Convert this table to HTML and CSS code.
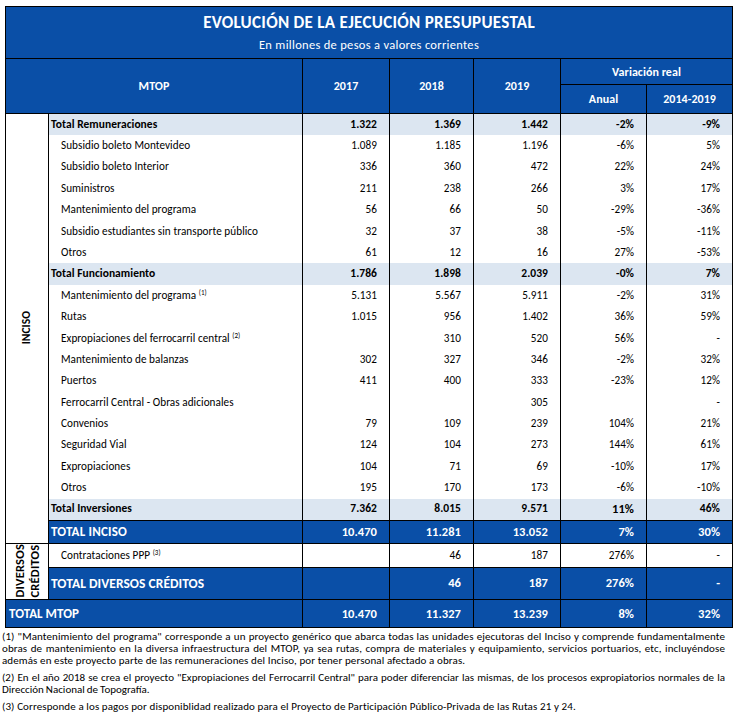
FILE: index.html
```html
<!DOCTYPE html>
<html lang="es">
<head>
<meta charset="utf-8">
<title>Evolución de la ejecución presupuestal</title>
<link rel="stylesheet" href="styles.css">
</head>
<body>
<div class="page">
<table class="budget">
  <colgroup>
    <col class="c-side"><col class="c-label"><col class="c-y17"><col class="c-y18"><col class="c-y19"><col class="c-an"><col class="c-pl">
  </colgroup>
  <tr class="r-title">
    <td colspan="7" class="title-cell">
      <div class="title">EVOLUCIÓN DE LA EJECUCIÓN PRESUPUESTAL</div>
      <div class="subtitle">En millones de pesos a valores corrientes</div>
    </td>
  </tr>
  <tr class="r-head1">
    <th colspan="2" rowspan="2">MTOP</th>
    <th rowspan="2">2017</th>
    <th rowspan="2">2018</th>
    <th rowspan="2">2019</th>
    <th colspan="2" class="var">Variación real</th>
  </tr>
  <tr class="r-head2">
    <th>Anual</th>
    <th>2014-2019</th>
  </tr>

  <tr class="row tot">
    <td rowspan="20" class="side"><span class="vert">INCISO</span></td>
    <td class="lbl">Total Remuneraciones</td><td>1.322</td><td>1.369</td><td>1.442</td><td>-2%</td><td>-9%</td>
  </tr>
  <tr class="row"><td class="lbl sub">Subsidio boleto Montevideo</td><td>1.089</td><td>1.185</td><td>1.196</td><td>-6%</td><td>5%</td></tr>
  <tr class="row"><td class="lbl sub">Subsidio boleto Interior</td><td>336</td><td>360</td><td>472</td><td>22%</td><td>24%</td></tr>
  <tr class="row"><td class="lbl sub">Suministros</td><td>211</td><td>238</td><td>266</td><td>3%</td><td>17%</td></tr>
  <tr class="row"><td class="lbl sub">Mantenimiento del programa</td><td>56</td><td>66</td><td>50</td><td>-29%</td><td>-36%</td></tr>
  <tr class="row"><td class="lbl sub">Subsidio estudiantes sin transporte público</td><td>32</td><td>37</td><td>38</td><td>-5%</td><td>-11%</td></tr>
  <tr class="row"><td class="lbl sub">Otros</td><td>61</td><td>12</td><td>16</td><td>27%</td><td>-53%</td></tr>
  <tr class="row tot"><td class="lbl">Total Funcionamiento</td><td>1.786</td><td>1.898</td><td>2.039</td><td>-0%</td><td>7%</td></tr>
  <tr class="row"><td class="lbl sub">Mantenimiento del programa <sup>(1)</sup></td><td>5.131</td><td>5.567</td><td>5.911</td><td>-2%</td><td>31%</td></tr>
  <tr class="row"><td class="lbl sub">Rutas</td><td>1.015</td><td>956</td><td>1.402</td><td>36%</td><td>59%</td></tr>
  <tr class="row"><td class="lbl sub">Expropiaciones del ferrocarril central <sup>(2)</sup></td><td></td><td>310</td><td>520</td><td>56%</td><td>-</td></tr>
  <tr class="row"><td class="lbl sub">Mantenimiento de balanzas</td><td>302</td><td>327</td><td>346</td><td>-2%</td><td>32%</td></tr>
  <tr class="row"><td class="lbl sub">Puertos</td><td>411</td><td>400</td><td>333</td><td>-23%</td><td>12%</td></tr>
  <tr class="row"><td class="lbl sub">Ferrocarril Central - Obras adicionales</td><td></td><td></td><td>305</td><td></td><td>-</td></tr>
  <tr class="row"><td class="lbl sub">Convenios</td><td>79</td><td>109</td><td>239</td><td>104%</td><td>21%</td></tr>
  <tr class="row"><td class="lbl sub">Seguridad Vial</td><td>124</td><td>104</td><td>273</td><td>144%</td><td>61%</td></tr>
  <tr class="row"><td class="lbl sub">Expropiaciones</td><td>104</td><td>71</td><td>69</td><td>-10%</td><td>17%</td></tr>
  <tr class="row"><td class="lbl sub">Otros</td><td>195</td><td>170</td><td>173</td><td>-6%</td><td>-10%</td></tr>
  <tr class="row tot last"><td class="lbl">Total Inversiones</td><td>7.362</td><td>8.015</td><td>9.571</td><td class="big">11%</td><td>46%</td></tr>
  <tr class="blue r-inciso"><td class="lbl">TOTAL INCISO</td><td>10.470</td><td>11.281</td><td>13.052</td><td>7%</td><td>30%</td></tr>

  <tr class="r-ppp">
    <td rowspan="2" class="side"><span class="vert two">DIVERSOS<br>CRÉDITOS</span></td>
    <td class="lbl sub">Contrataciones PPP <sup>(3)</sup></td><td></td><td>46</td><td>187</td><td>276%</td><td>-</td>
  </tr>
  <tr class="blue r-div"><td class="lbl">TOTAL DIVERSOS CRÉDITOS</td><td></td><td>46</td><td>187</td><td>276%</td><td>-</td></tr>
  <tr class="blue r-mtop"><td colspan="2" class="lbl mtop">TOTAL MTOP</td><td>10.470</td><td>11.327</td><td>13.239</td><td>8%</td><td>32%</td></tr>
</table>

<div class="notes">
  <p>(1) "Mantenimiento del programa" corresponde a un proyecto genérico que abarca todas las unidades ejecutoras del Inciso y comprende fundamentalmente obras de mantenimiento en la diversa infraestructura del MTOP, ya sea rutas, compra de materiales y equipamiento, servicios portuarios, etc, incluyéndose además en este proyecto parte de las remuneraciones del Inciso, por tener personal afectado a obras.</p>
  <p class="tight">(2) En el año 2018 se crea el proyecto "Expropiaciones del Ferrocarril Central" para poder diferenciar las mismas, de los procesos expropiatorios normales de la Dirección Nacional de Topografía.</p>
  <p>(3) Corresponde a los pagos por disponiblidad realizado para el Proyecto de Participación Público-Privada de las Rutas 21 y 24.</p>
</div>
</div>
</body>
</html>
```

FILE: styles.css
```css
* { box-sizing: border-box; }
html, body { margin: 0; padding: 0; background: #fff; }
body {
  font-family: "Carlito", "Lato", "Liberation Sans", sans-serif;
  color: #000;
}
.page {
  padding: 6px 0 0 5px;
  width: 736px;
}
.budget {
  border-collapse: collapse;
  table-layout: fixed;
  width: 727px;
  font-size: 11.2px;
  letter-spacing: 0.05px;
}
.c-side { width: 43px; }
.c-label { width: 254px; }
.c-y17 { width: 87px; }
.c-y18 { width: 84px; }
.c-y19 { width: 87px; }
.c-an { width: 86px; }
.c-pl { width: 86px; }

.budget td, .budget th {
  border: 1px solid #000;
  padding: 0 12px 0 0;
  text-align: right;
  vertical-align: middle;
  white-space: nowrap;
  line-height: 1;
}

.title-cell {
  background: #0a4fa7;
  color: #fff;
  text-align: center !important;
  padding: 0 !important;
  height: 52px;
}
.title {
  font-weight: bold;
  font-size: 17px;
  letter-spacing: 0.3px;
  line-height: 20px;
  margin-top: 1px;
}
.subtitle {
  font-size: 12.5px;
  letter-spacing: 0.3px;
  line-height: 16px;
  margin-top: 4px;
}

.budget th {
  background: #0a4fa7;
  color: #fff;
  text-align: center;
  padding: 0;
  font-size: 12px;
  font-weight: bold;
}
.r-head1 { height: 26px; }
.r-head2 { height: 29px; }

.row td { border-top: 0; border-bottom: 0; height: 21.4px; }
.row.last td { height: 21.8px; }
.row.tot td { background: #dce6f1; font-weight: bold; font-size: 11.5px; }
.row td.side, .r-ppp td.side { background: #fff; }
.side {
  text-align: center !important;
  padding: 0 !important;
  font-weight: bold;
  font-size: 13px;
}
.vert {
  display: inline-block;
  writing-mode: vertical-rl;
  transform: rotate(180deg);
  line-height: 1;
}
.vert.two {
  font-size: 12.5px;
  line-height: 15px;
  letter-spacing: 0.2px;
}
.lbl {
  text-align: left !important;
  padding: 0 0 0 2px !important;
}
.lbl.sub { padding-left: 12px !important; }
.lbl.mtop { padding-left: 3px !important; }
sup {
  font-size: 7px;
  vertical-align: 4px;
  line-height: 0;
}
.big { font-size: 12.5px !important; }

.blue td {
  background: #0a4fa7;
  color: #fff;
  font-weight: bold;
  font-size: 12.5px;
}
.blue td.side { background: #fff; color: #000; }
.r-inciso td.lbl { font-size: 13px; letter-spacing: 0.2px; }
.r-inciso td { height: 23px; }
.r-ppp td { height: 24px; }
.r-div td { height: 32px; }
.r-div td.lbl { font-size: 13.5px; }
.r-mtop td { height: 28px; }
.r-mtop td.lbl { font-size: 13px; }

.notes {
  width: 723px;
  margin-left: -3px;
  padding-top: 3px;
  font-size: 11px;
  letter-spacing: 0.1px;
  line-height: 12px;
}
.notes p {
  margin: 0 0 5px 0;
  text-align: justify;
}
.notes p.tight {
  letter-spacing: 0;
  word-spacing: -0.5px;
}
```
